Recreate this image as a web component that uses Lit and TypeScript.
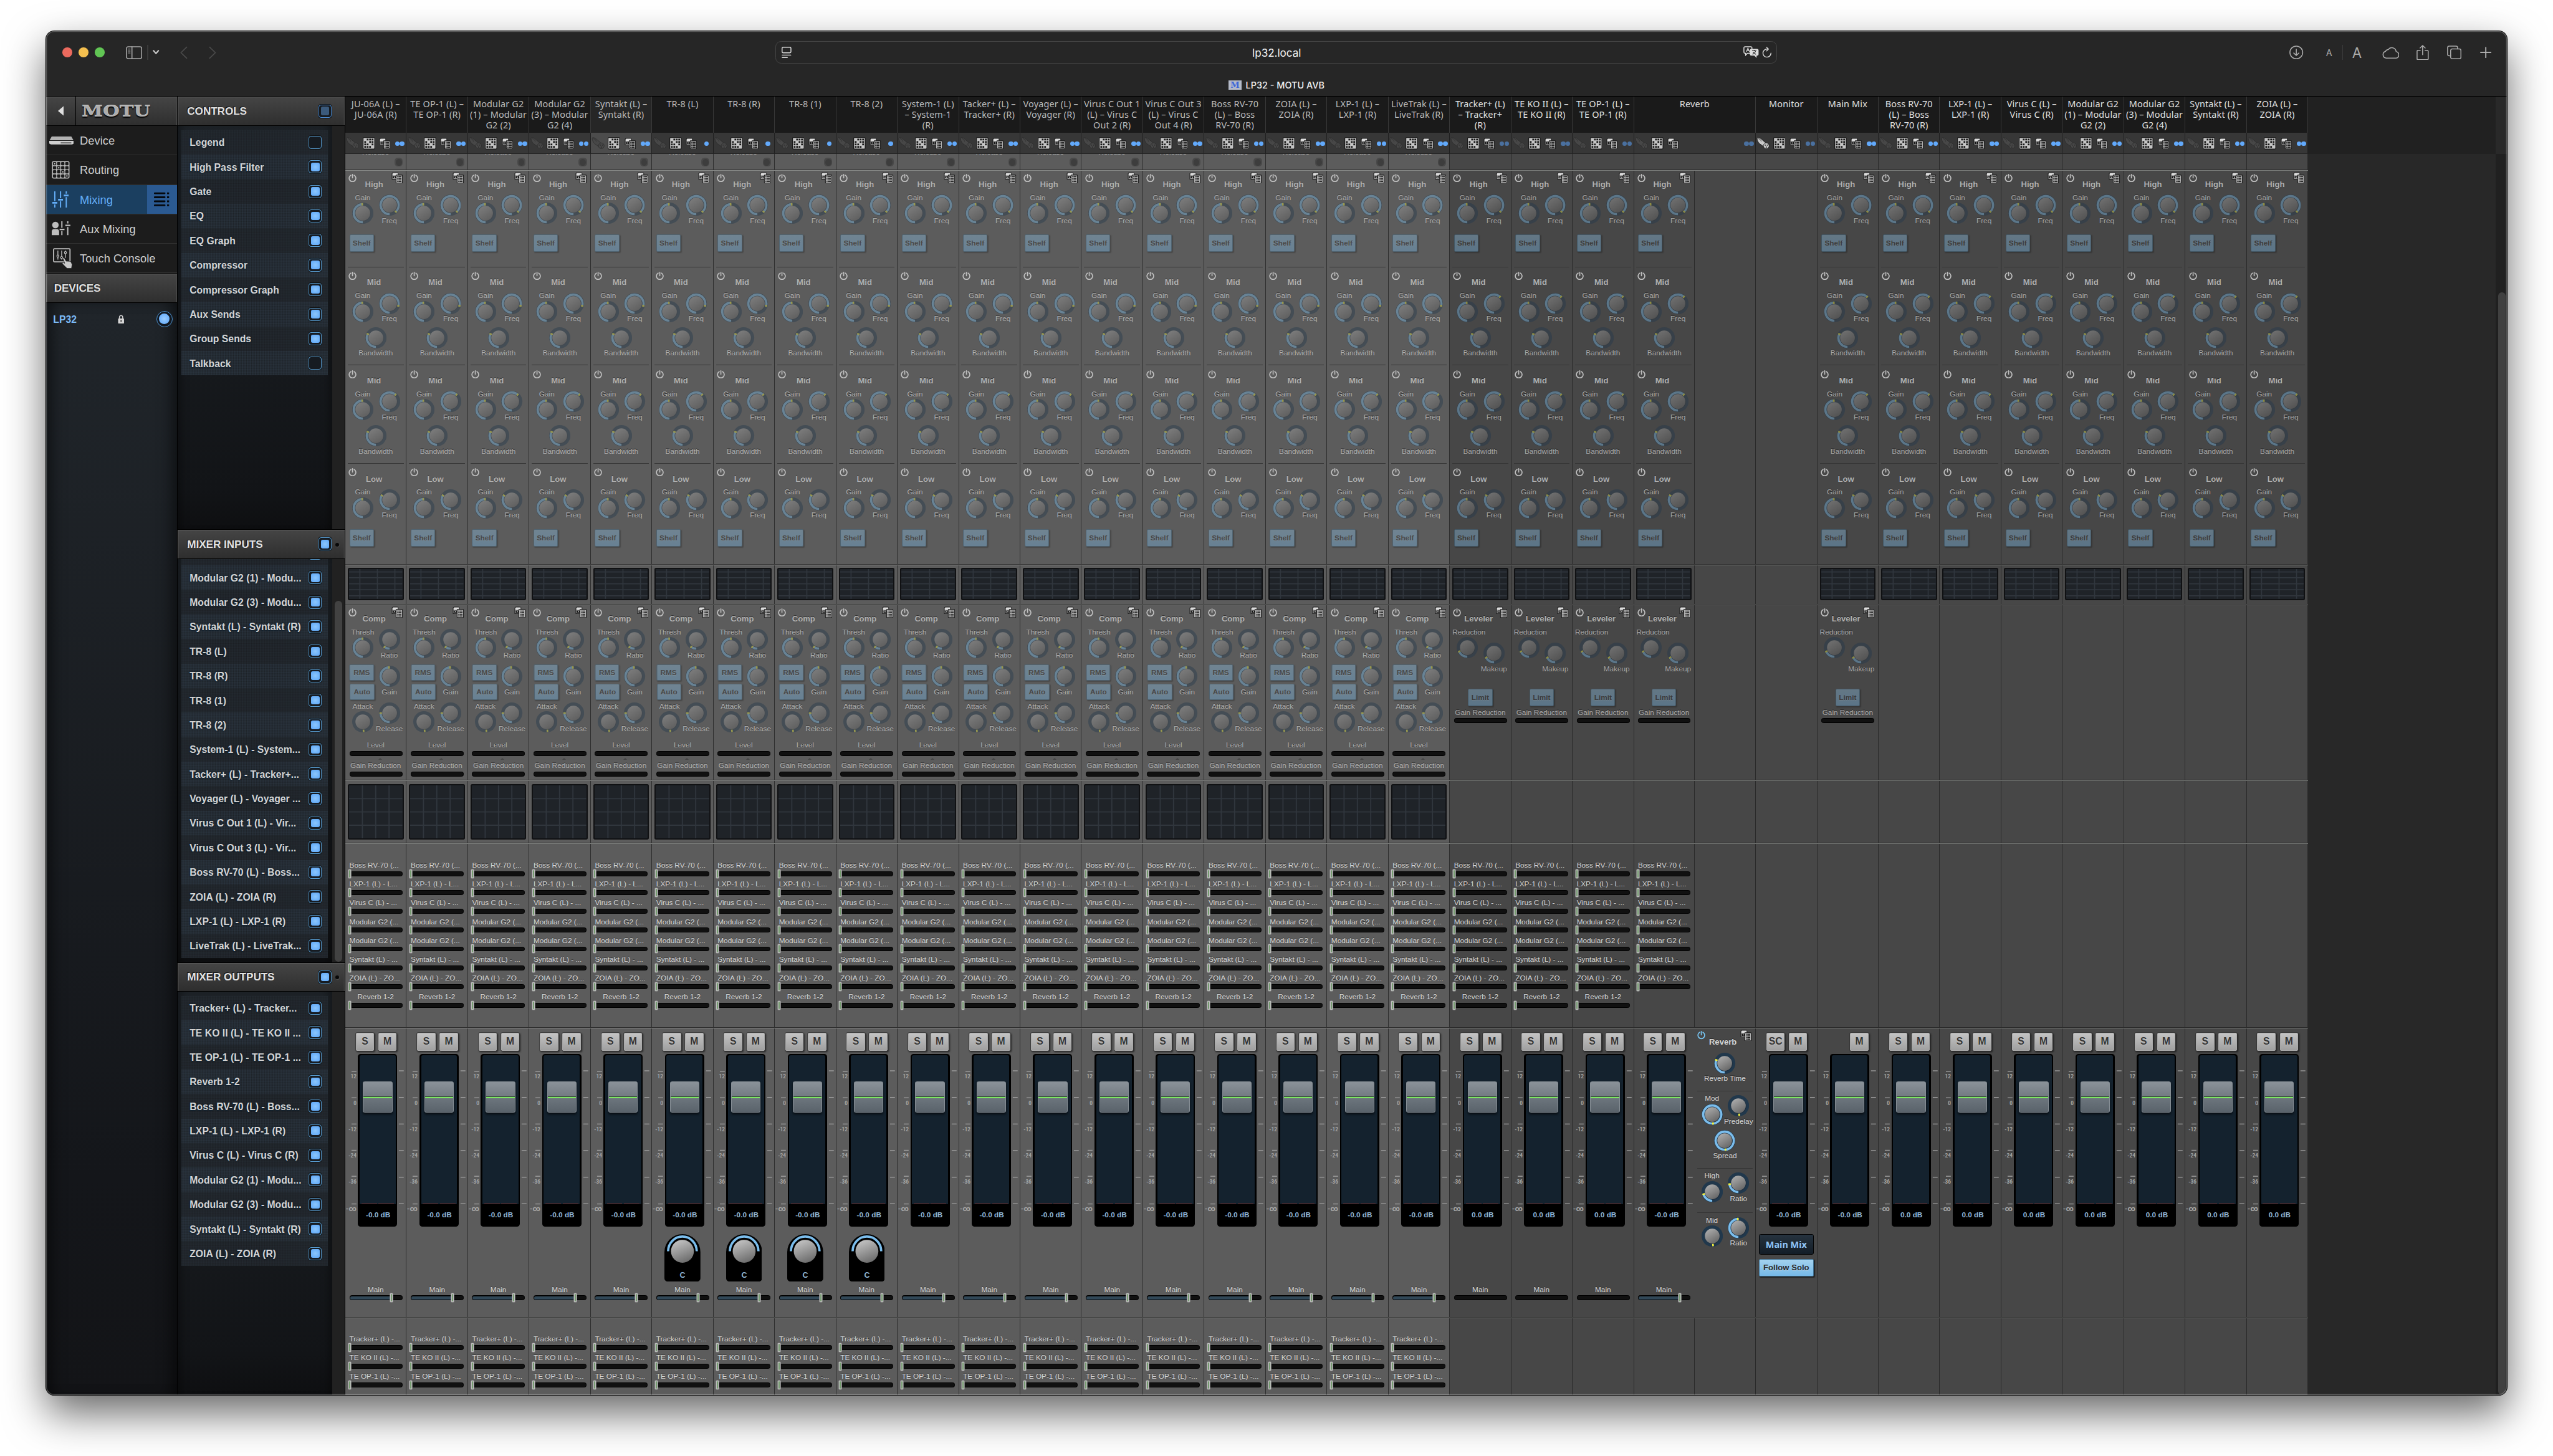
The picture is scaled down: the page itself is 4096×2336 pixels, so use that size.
import { LitElement, html, svg, css, nothing } from "lit";
import { customElement, property } from "lit/decorators.js";
import { classMap } from "lit/directives/class-map.js";

interface Send { text: string; center?: boolean }
interface Strip {
  name: string[];
  kind: "in" | "out";
  selected?: boolean;
  mono?: boolean;
  dimDots?: boolean;
  mic?: boolean;
  gate?: boolean;
  eq?: boolean;
  dyn?: "comp" | "leveler";
  sends?: number;
  groups?: boolean;
  buttons: string[];
  db: string;
  main?: "fill" | "empty";
  reverb?: boolean;
  monitor?: boolean;
}

const SENDS: Send[] = [
  { text: "Boss RV-70 (..." },
  { text: "LXP-1 (L) - L..." },
  { text: "Virus C (L) - ..." },
  { text: "Modular G2 (..." },
  { text: "Modular G2 (..." },
  { text: "Syntakt (L) - ..." },
  { text: "ZOIA (L) - ZO..." },
  { text: "Reverb 1-2", center: true },
];
const GROUPS: Send[] = [
  { text: "Tracker+ (L) -..." },
  { text: "TE KO II (L) -..." },
  { text: "TE OP-1 (L) -..." },
];

const input = (name: string[], extra: Partial<Strip> = {}): Strip => ({
  name, kind: "in", gate: true, eq: true, dyn: "comp", sends: 8, groups: true,
  buttons: ["S", "M"], db: "-0.0 dB", main: "fill", ...extra,
});
const group = (name: string[], extra: Partial<Strip> = {}): Strip => ({
  name, kind: "out", dimDots: true, eq: true, dyn: "leveler", sends: 8,
  buttons: ["S", "M"], db: "0.0 dB", main: "empty", ...extra,
});
const aux = (name: string[], extra: Partial<Strip> = {}): Strip => ({
  name, kind: "out", eq: true, buttons: ["S", "M"], db: "0.0 dB", ...extra,
});

const STRIPS: Strip[] = [
  input(["JU-06A (L) –", "JU-06A (R)"]),
  input(["TE OP-1 (L) –", "TE OP-1 (R)"]),
  input(["Modular G2", "(1) – Modular", "G2 (2)"]),
  input(["Modular G2", "(3) – Modular", "G2 (4)"]),
  input(["Syntakt (L) –", "Syntakt (R)"], { selected: true }),
  input(["TR-8 (L)"], { mono: true }),
  input(["TR-8 (R)"], { mono: true }),
  input(["TR-8 (1)"], { mono: true }),
  input(["TR-8 (2)"], { mono: true }),
  input(["System-1 (L)", "– System-1", "(R)"]),
  input(["Tacker+ (L) –", "Tracker+ (R)"]),
  input(["Voyager (L) –", "Voyager (R)"]),
  input(["Virus C Out 1", "(L) – Virus C", "Out 2 (R)"]),
  input(["Virus C Out 3", "(L) – Virus C", "Out 4 (R)"]),
  input(["Boss RV-70", "(L) – Boss", "RV-70 (R)"]),
  input(["ZOIA (L) –", "ZOIA (R)"]),
  input(["LXP-1 (L) –", "LXP-1 (R)"]),
  input(["LiveTrak (L) –", "LiveTrak (R)"]),
  group(["Tracker+ (L)", "– Tracker+", "(R)"]),
  group(["TE KO II (L) –", "TE KO II (R)"]),
  group(["TE OP-1 (L) –", "TE OP-1 (R)"]),
  group(["Reverb"], { reverb: true, sends: 7, db: "-0.0 dB", main: "fill" }),
  { name: ["Monitor"], kind: "out", dimDots: true, mic: true, monitor: true, buttons: ["SC", "M"], db: "-0.0 dB" },
  aux(["Main Mix"], { dyn: "leveler", buttons: ["M"], db: "-0.0 dB" }),
  aux(["Boss RV-70", "(L) – Boss", "RV-70 (R)"]),
  aux(["LXP-1 (L) –", "LXP-1 (R)"]),
  aux(["Virus C (L) –", "Virus C (R)"]),
  aux(["Modular G2", "(1) – Modular", "G2 (2)"]),
  aux(["Modular G2", "(3) – Modular", "G2 (4)"]),
  aux(["Syntakt (L) –", "Syntakt (R)"]),
  aux(["ZOIA (L) –", "ZOIA (R)"]),
];

const CONTROLS: [string, boolean][] = [
  ["Legend", false], ["High Pass Filter", true], ["Gate", true], ["EQ", true], ["EQ Graph", true],
  ["Compressor", true], ["Compressor Graph", true], ["Aux Sends", true], ["Group Sends", true], ["Talkback", false],
];
const INPUTS: [string, boolean][] = [
  "", "Modular G2 (1) - Modu...", "Modular G2 (3) - Modu...", "Syntakt (L) - Syntakt (R)",
  "TR-8 (L)", "TR-8 (R)", "TR-8 (1)", "TR-8 (2)", "System-1 (L) - System...", "Tacker+ (L) - Tracker+...",
  "Voyager (L) - Voyager ...", "Virus C Out 1 (L) - Vir...", "Virus C Out 3 (L) - Vir...", "Boss RV-70 (L) - Boss...",
  "ZOIA (L) - ZOIA (R)", "LXP-1 (L) - LXP-1 (R)", "LiveTrak (L) - LiveTrak...",
].map((t) => [t, true]);
const OUTPUTS: [string, boolean][] = [
  "Tracker+ (L) - Tracker...", "TE KO II (L) - TE KO II ...", "TE OP-1 (L) - TE OP-1 ...", "Reverb 1-2",
  "Boss RV-70 (L) - Boss...", "LXP-1 (L) - LXP-1 (R)", "Virus C (L) - Virus C (R)", "Modular G2 (1) - Modu...",
  "Modular G2 (3) - Modu...", "Syntakt (L) - Syntakt (R)", "ZOIA (L) - ZOIA (R)",
].map((t) => [t, true]);

/* ---------- icons ---------- */

const powerIcon = (on = false) => html`<svg class="power" width="10" height="10" viewBox="0 0 10 10" fill="none"
  stroke=${on ? "#78c6f3" : "#c0c0c0"} stroke-width="1.25" stroke-linecap="round">
  <path d="M3 1.7A4.1 4.1 0 1 0 7 1.7"/><path d="M5 .7V4.9"/></svg>`;

const listIcon = () => html`<svg class="preset" width="14" height="14" viewBox="0 0 14 14">
  <path d="M1.6 .4H7.6L8.6 1.4V9.2H.4V1.6Z" fill="#1d1d1d"/>
  <path d="M2 1.2H7.8V4.4H1.2V2Z" fill="#dcdcdc"/><rect x="1.2" y="4.4" width="6.6" height="4" fill="#a0a0a0"/>
  <rect x="2" y="5" width="3.6" height="2.6" fill="#111"/><rect x="3.2" y="5.8" width="1.2" height="1.2" fill="#ddd"/>
  <rect x="5.2" y="3.3" width="8.6" height="10.6" rx=".8" fill="#1d1d1d"/>
  <rect x="6" y="4.1" width="7" height="9" rx=".4" fill="#b4b4b4"/>
  <path d="M7 5.6H8M8.6 5.6H12.2M7 7.6H8M8.6 7.6H12.2M7 9.6H8M8.6 9.6H12.2M7 11.6H8M8.6 11.6H12.2" stroke="#161616" stroke-width="1"/>
</svg>`;

const CELLS = [[1, 0], [2, 0], [3, 0], [0, 1], [2, 1], [3, 1], [0, 2], [1, 2], [3, 2], [0, 3], [1, 3], [2, 3]];
const gridIcon = () => html`<svg width="15" height="15" viewBox="0 0 15 15">
  <rect width="15" height="15" rx="1.6" fill="#191919"/><rect x=".9" y=".9" width="13.2" height="13.2" rx=".7" fill="#c4c4c4"/>
  ${CELLS.map(([x, y]) => svg`<rect x=${1.9 + x * 3} y=${1.9 + y * 3} width="2.1" height="2.1" fill="#171717"/>`)}
</svg>`;

const plugIcon = (on = false) => html`<svg width="16" height="15" viewBox="0 0 16 15">
  <g fill=${on ? "#c9c9c9" : "#474747"} stroke=${on ? "#151515" : "#2c2c2c"} stroke-width=".6">
    <path d="M1 .8C2.4 .2 4.6 1 6.4 2.8L12 7.6 9.6 12.2 4.2 8.2C1.6 6.2 .4 2.4 1 .8Z"/>
    <path d="M2.4 2C4 1.8 5.6 3.6 5.8 5.4" fill="none"/>
    <circle cx="12" cy="10.6" r="3.5"/>
  </g>
  <g fill=${on ? "#151515" : "#2c2c2c"}><circle cx="10.8" cy="9.8" r=".7"/><circle cx="13.3" cy="9.8" r=".7"/><circle cx="12" cy="12.2" r=".7"/></g>
</svg>`;

/* value runs 0..1 clockwise from six o'clock */
const knob = (value: number) => {
  const v = Math.min(Math.max(value, 0), 0.999);
  const a = v * 2 * Math.PI;
  const x = 13 - 11 * Math.sin(a);
  const y = 13 + 11 * Math.cos(a);
  return html`<svg class="knob" width="26" height="26" viewBox="0 0 26 26">
    <defs><linearGradient id="kb" x1="0" y1="0" x2=".6" y2="1"><stop offset="0" stop-color="#b4b4b4"/><stop offset="1" stop-color="#6a6a6a"/></linearGradient></defs>
    <circle cx="13" cy="13" r="13" fill="#21384c"/>
    ${v > 0.01 ? svg`<path d="M13 24A11 11 0 ${v > 0.5 ? 1 : 0} 1 ${x} ${y}" fill="none" stroke="#7bbdec" stroke-width="2.8"/>` : nothing}
    <rect x="12" y="22.4" width="2" height="3" fill="#f6f23e" transform="rotate(${v < 0.01 || v > 0.99 ? -5 : v * 360} 13 13)"/>
    <circle cx="13.4" cy="13.4" r="9.3" fill="#1c2a38" opacity=".7"/>
    <circle cx="13" cy="13" r="9" fill="url(#kb)"/>
  </svg>`;
};

const LEFT_SCALE: [number, string][] = [[21.2, "12"], [53.5, "0"], [85.5, "-12"], [117.6, "-24"], [149.4, "-36"], [183.3, "-∞"]];
const RIGHT_SCALE = [20.5, 53, 85.5, 118, 150.6, 183];

@customElement("mix-strip")
class MixStrip extends LitElement {
  @property({ attribute: false }) data!: Strip;

  static styles = css`
    :host { display: block; flex: none; width: 75px; height: 1587px; }
    :host([wide]) { width: 149px; }
    * { box-sizing: border-box; }
    svg { display: block; flex: none; }
    .strip { height: 100%; display: flex; flex-direction: column; font-family: "Liberation Sans", Arial, sans-serif; --bg: #474747; --line: #2a2a2a; --hi: #777977; }
    .strip.in { --bg: #5c5c5c; --line: #2e2e2e; --hi: #858785; }
    .name { flex: none; height: 44px; padding-top: 2.3px; background: #1a1a1a; border-right: 1px solid #383838; font: 11px/13.1px "Noto Sans", "Open Sans", sans-serif; letter-spacing: .12px; color: #e0e0e0; text-align: center; white-space: nowrap; }
    .name span { display: flex; justify-content: center; }
    .in .name { color: #bcbcbc; }
    .tools { flex: none; height: 26px; display: flex; align-items: center; background: #373737; border-right: 1px solid #202020; border-bottom: 1.5px solid #232323; padding: 1px 2px 0 1px; }
    .selected .name { background: #262626; }
    .selected .tools { background: #4c4c4c; }
    .tools .grid { margin-left: 4px; }
    .tools .list { margin-left: 5px; }
    .dots { margin-left: auto; display: flex; gap: .3px; padding-top: 1px; }
    .dots i { width: 5.6px; height: 5.6px; border-radius: 50%; background: #62a9fb; }
    .dots.dim i { background: #4a709f; }
    .dots.mono { margin-right: 3px; }
    .sec { flex: none; display: flex; background: var(--bg); border-top: 1px solid var(--hi); border-bottom: 1px solid var(--line); overflow: hidden; }
    .cell { width: 75px; flex: none; display: flex; flex-direction: column; border-right: 1px solid var(--line); position: relative; }
    .cell > * { flex-shrink: 0; }
    .cell.first { width: 74px; }
    .joined .cell.first { border-right-color: transparent; }
    .gate { height: 20px; border-top: 0; }
    .eq { height: 482px; }
    .graph { height: 49px; }
    .dyn { height: 215px; }
    .cgraph { height: 77px; }
    .sends { height: 225px; }
    .fader { height: 354px; }
    .groups { height: 96px; border-bottom: 0; }
    .lbl { height: 10px; font-size: 9px; line-height: 10.6px; color: #dadada; text-shadow: 0 -1px 0 rgba(0,0,0,.4); white-space: nowrap; }
    .off .lbl { color: #b2b2b2; }
    .strip:not(.in) .off .lbl { color: #aaa; }
    .off .knob, .off .btn { opacity: .4; }
    .ghost { margin: -6.8px 0 0 37px; transform: translateX(-50%); align-self: flex-start; color: #a4a4a4; }
    .led { align-self: flex-end; margin: 1.8px 4px 0 0; width: 10px; height: 10.5px; border-radius: 4px; background: #494949; display: flex; align-items: center; justify-content: center; }
    .led i { width: 7.5px; height: 8.5px; border-radius: 50%; background: #3d3d3d; }
    .band { height: 119px; flex: none; display: flex; flex-direction: column; }
    .band:first-child { height: 117px; }
    .rule { flex: none; height: 1px; margin: 0 3px; background: #353535; }
    .head { height: 30px; flex: none; display: flex; padding: 5.4px 4px 0 4px; align-items: flex-start; }
    .band:first-child .head, .head.dynhead { height: 28px; padding-top: 3.5px; }
    .head .preset { margin-top: -2px; }
    .head .blank { width: 14px; }
    .title { flex: 1; text-align: center; font-size: 10px; line-height: 12px; font-weight: 700; color: #d8d8d8; padding-top: 7.2px; text-shadow: 0 -1px 0 rgba(0,0,0,.45); white-space: nowrap; display: flex; justify-content: center; }
    .off .title { color: #b0b0b0; }
    .pair { display: flex; height: 40px; flex: none; }
    .l, .r { display: flex; flex-direction: column; align-items: center; flex: none; }
    .l { width: 42.6px; }
    .r { width: 22.4px; padding-top: 1px; }
    .l .knob { margin-top: 1px; }
    .r .lbl { margin-top: 1px; }
    .btn { width: 30px; height: 21.5px; flex: none; border: 1px solid #3f6f90; border-radius: 1.5px; background: linear-gradient(#8fc0e2, #7ab9e8); color: #2b2b2b; font-size: 9px; font-weight: 700; display: flex; align-items: center; justify-content: center; box-shadow: 1px 1px 1px rgba(0,0,0,.5); text-shadow: 0 1px 0 rgba(255,255,255,.35); }
    .shelf { margin: 9.8px 0 0 5px; }
    .bw { display: flex; flex-direction: column; align-items: center; width: 74.4px; padding-top: 3px; }
    .bw .lbl { margin-top: 1px; }
    .screen { margin: 3.5px 3px 0 3px; border: 1.8px solid #101113; border-radius: 2px; background: #1f2328; }
    .screen svg { width: 100%; height: 100%; }
    .s1 { height: 39.5px; }
    .s2 { height: 68px; }
    .comp { display: flex; height: 138px; flex: none; }
    .comp .btn { height: 20px; }
    .rms { margin-top: 7px; transform: translateX(-1.3px); }
    .auto { margin-top: 4px; transform: translateX(-.8px); }
    .comp .attack { margin-top: 2.5px; }
    .comp .r .knob + .lbl + .knob { margin-top: 8px; }
    .lev .first { height: 74px; }
    .lev .red { margin-left: 4px; }
    .lev .r { padding-top: 18px; }
    .mid { display: flex; justify-content: center; }
    .gr { margin-top: 2.6px; }
    .bar { height: 6px; margin: 2px 4.5px 0 5px; background: #101010; border: 1px solid #000; border-radius: 2.5px; display: flex; align-items: center; flex: none; }
    .fill { height: 4px; width: 51px; background: #314858; border-radius: 2px 0 0 2px; flex: none; }
    .thumb { width: 4.6px; height: 12.2px; margin-left: -3px; flex: none; }
    .tri { width: 0; height: 0; margin: 2.5px 0 0 40px; border: 3px solid transparent; border-top: 0; border-bottom: 2.8px solid #474747; }
    .send { height: 23px; flex: none; }
    .send .lbl { padding-left: 5px; display: flex; }
    .send .lbl.c { padding: 0; justify-content: center; }
    .list8 { padding-top: 21px; }
    .keys { display: flex; justify-content: flex-end; gap: 5px; height: 32px; padding: 5.5px 11.5px 0 0; flex: none; }
    .key { width: 22.5px; height: 22px; border-radius: 1.5px; background: linear-gradient(#c4c4c4, #9f9f9f); border: 1px solid #a9a9a9; color: #333; font-size: 12px; font-weight: 700; display: flex; align-items: center; justify-content: center; box-shadow: 0 0 0 .5px #333, 1px 1px 2px rgba(0,0,0,.6); text-shadow: 0 1px 0 rgba(255,255,255,.4); }
    .slider { display: flex; height: 211px; flex: none; margin-top: -1px; }
    .well { width: 48px; height: 211px; border-radius: 3.5px; background: #000; padding: 2px 2px 0; display: flex; flex-direction: column; flex: none; }
    .track { height: 182px; background: #14222e; border-radius: 2px 2px 0 0; display: flex; flex-direction: column; align-items: center; justify-content: space-between; padding-top: 32px; }
    .cap { width: 36px; height: 38px; border-radius: 2px; background: linear-gradient(#8a9299 0, #737b82 48%, #2a4a2a 49%, #77e35c 50%, #84f765 53%, #6c757d 54%, #5a636b 100%); border: 1px solid #868e95; box-shadow: 0 2px 3px rgba(0,0,0,.6); }
    .clips { display: flex; gap: 2px; width: 40px; }
    .clips i { flex: 1; height: 1px; background: #7a2e2c; }
    .db { height: 26px; display: flex; align-items: center; justify-content: center; color: #8fb4d4; font-size: 9px; font-weight: 700; white-space: nowrap; padding-left: 1px; }
    .extra { height: 72.4px; flex: none; padding: 9.4px 3.5px 0; }
    .pan { margin-left: 11.7px; width: 44px; height: 58px; }
    .select { height: 25px; border: 1px solid #000; border-radius: 2px; background: linear-gradient(#26333f, #131d27); color: #8fc3f7; font: 700 11px "Noto Sans", sans-serif; display: flex; align-items: center; justify-content: center; }
    .solo { width: auto; margin-top: 5.5px; font-size: 10px; background: linear-gradient(#a3d2ef, #76b9e8); }
    .reverb .head { padding-left: 3px; }
    .reverb .rule { margin-top: 9.5px; }
    .reverb .pair { margin-top: 4px; }
    .reverb .bw { padding-top: 1.5px; }
    .reverb .pair.short { height: 36px; }
    .reverb .bw.spread { padding-top: 7px; }
  `;

  private label = (t: string) => html`<div class="lbl">${t}</div>`;

  private thumb() {
    return html`<svg class="thumb" viewBox="0 0 4.6 12.2"><rect x=".3" y=".3" width="4" height="11.6" rx="1.3" fill="#bdbdbd" stroke="#6d6d6d" stroke-width=".4"/><rect x="1.8" y="1.8" width="1" height="8.6" fill="#4f8a46"/></svg>`;
  }

  private band(title: string, freq: number, first: boolean, bw: boolean, last: boolean) {
    return html`<div class="band">
        <div class="head">${powerIcon()}<div class="title">${title}</div>${first ? listIcon() : html`<div class="blank"></div>`}</div>
        <div class="pair">
          <div class="l">${this.label("Gain")}${knob(0.49)}</div>
          <div class="r">${knob(freq)}${this.label("Freq")}</div>
        </div>
        ${bw ? html`<div class="bw">${knob(0.32)}${this.label("Bandwidth")}</div>` : html`<div class="btn shelf">Shelf</div>`}
      </div>
      ${last ? nothing : html`<div class="rule"></div>`}`;
  }

  private eq() {
    const inp = this.data.kind === "in";
    return html`${this.band("High", 0.88, true, false, false)}${this.band("Mid", inp ? 0.79 : 0.614, false, true, false)}
      ${this.band("Mid", 0.614, false, true, false)}${this.band("Low", 0.333, false, false, true)}`;
  }

  private eqGraph() {
    return html`<div class="screen s1"><svg viewBox="0 0 64 36" preserveAspectRatio="none" stroke="#30363d" stroke-width="1.3">
      <path d="M13 0V36M34 0V36M55 0V36M0 3.5H64M0 10.5H64M0 17.8H64M0 25H64M0 32.2H64"/></svg></div>`;
  }
  private compGraph() {
    return html`<div class="screen s2"><svg viewBox="0 0 64 64" preserveAspectRatio="none" stroke="#30363d" stroke-width="1.4">
      <path d="M16 0V64M32 0V64M48 0V64M0 16H64M0 32H64M0 48H64"/></svg></div>`;
  }

  private comp() {
    return html`<div class="head dynhead">${powerIcon()}<div class="title">Comp</div>${listIcon()}</div>
      <div class="comp">
        <div class="l">${this.label("Thresh")}${knob(0.495)}<div class="btn rms">RMS</div><div class="btn auto">Auto</div>
          <div class="lbl attack">Attack</div>${knob(0)}</div>
        <div class="r">${knob(0.097)}${this.label("Ratio")}${knob(0.49)}${this.label("Gain")}${knob(0.25)}${this.label("Release")}</div>
      </div>
      <div class="lbl mid">Level</div><div class="bar"></div><div class="tri"></div>
      <div class="lbl mid gr">Gain Reduction</div><div class="bar"></div>`;
  }

  private leveler() {
    return html`<div class="head dynhead">${powerIcon()}<div class="title">Leveler</div>${listIcon()}</div>
      <div class="lev">
        <div class="pair first">
          <div class="l"><div class="lbl red">Reduction</div>${knob(0.18)}</div>
          <div class="r">${knob(0.17)}${this.label("Makeup")}</div>
        </div>
        <div class="mid"><div class="btn">Limit</div></div>
        <div class="lbl mid gr">Gain Reduction</div><div class="bar"></div>
      </div>`;
  }

  private sendList(items: Send[]) {
    return html`<div class="list8">${items.map((s) => html`<div class="send">
      <div class=${classMap({ lbl: true, c: !!s.center })}>${s.text}</div><div class="bar">${this.thumb()}</div></div>`)}</div>`;
  }

  private fader() {
    const d = this.data;
    return html`<div class="keys">${d.buttons.map((b) => html`<div class="key">${b}</div>`)}</div>
      <div class="slider">
        <svg width="15.6" height="211" viewBox="0 0 15.6 211" fill="#a8a8a8" font-family="Roboto, sans-serif" text-anchor="end">
          ${LEFT_SCALE.map(([y, t]) => svg`<rect x="7.6" y=${y - 0.4} width="6" height=".9"/><text x="13.6" y=${y + 8.8} font-size=${t === "-∞" ? 9 : 6.2} font-weight="700">${t}</text>`)}
        </svg>
        <div class="well">
          <div class="track"><div class="cap"></div><div class="clips">${d.mono ? html`<i></i>` : html`<i></i><i></i>`}</div></div>
          <div class="db">${d.db}</div>
        </div>
        <svg width="9" height="211" viewBox="0 0 9 211" fill="#a8a8a8">${RIGHT_SCALE.map((y) => svg`<rect x="2.2" y=${y - 0.4} width="6" height=".9"/>`)}</svg>
      </div>
      <div class="extra">${d.mono ? this.pan() : d.monitor ? html`<div class="select">Main Mix</div><div class="btn solo">Follow Solo</div>` : nothing}</div>
      ${d.main ? html`<div class="lbl mid">Main</div><div class="bar">${d.main === "fill" ? html`<div class="fill"></div>${this.thumb()}` : nothing}</div>` : nothing}`;
  }

  private pan() {
    return html`<svg class="pan" viewBox="0 0 44 58">
      <defs><linearGradient id="pk" x1=".2" y1="0" x2=".6" y2="1"><stop offset="0" stop-color="#c6c6c6"/><stop offset="1" stop-color="#6c6c6c"/></linearGradient></defs>
      <path d="M0 22A22 22 0 0 1 44 22V54A4 4 0 0 1 40 58H4A4 4 0 0 1 0 54Z" fill="#000"/>
      <path d="M4.5 21A17.5 18 0 0 1 39.5 21" fill="none" stroke="#7bbdec" stroke-width="2.8"/>
      <circle cx="22" cy="21" r="14" fill="url(#pk)"/>
      <text x="22" y="53" text-anchor="middle" font-size="9.5" font-weight="700" fill="#8fb4d4">C</text></svg>`;
  }

  private reverbSection() {
    return html`
      <div class="head dynhead">${powerIcon(true)}<div class="title">Reverb</div>${listIcon()}</div>
      <div class="bw">${knob(0.31)}${this.label("Reverb Time")}</div>
      <div class="rule"></div>
      <div class="pair short"><div class="l">${this.label("Mod")}${knob(1)}</div><div class="r">${knob(0)}${this.label("Predelay")}</div></div>
      <div class="bw spread">${knob(1)}${this.label("Spread")}</div>
      <div class="rule"></div>
      <div class="pair"><div class="l">${this.label("High")}${knob(0.207)}</div><div class="r">${knob(0.23)}${this.label("Ratio")}</div></div>
      <div class="rule"></div>
      <div class="pair"><div class="l">${this.label("Mid")}${knob(0)}</div><div class="r">${knob(0.49)}${this.label("Ratio")}</div></div>`;
  }

  private section(cls: string, content: unknown, off = true, second: unknown = nothing) {
    const rev = !!this.data.reverb;
    return html`<div class=${"sec " + cls}>
      <div class=${classMap({ cell: true, off, first: rev })}>${content}</div>
      ${rev ? html`<div class="cell reverb">${second}</div>` : nothing}</div>`;
  }

  render() {
    const d = this.data;
    return html`<div class=${classMap({ strip: true, in: d.kind === "in", selected: !!d.selected })}>
      <div class="name">${d.name.map((l) => html`<span>${l}</span>`)}</div>
      <div class="tools">
        ${plugIcon(!!d.mic)}<div class="grid">${gridIcon()}</div><div class="list">${listIcon()}</div>
        <div class=${classMap({ dots: true, dim: !!d.dimDots, mono: !!d.mono })}>${d.mono ? html`<i></i>` : html`<i></i><i></i>`}</div>
      </div>
      ${this.section("gate joined", d.gate ? html`<div class="lbl ghost">Release</div><div class="led"><i></i></div>` : nothing)}
      ${this.section("eq", d.eq ? this.eq() : nothing)}
      ${this.section("graph", d.eq ? this.eqGraph() : nothing)}
      ${this.section("dyn", d.dyn === "comp" ? this.comp() : d.dyn === "leveler" ? this.leveler() : nothing)}
      ${this.section("cgraph", d.dyn === "comp" ? this.compGraph() : nothing)}
      ${this.section("sends", d.sends ? this.sendList(SENDS.slice(0, d.sends)) : nothing, false)}
      ${this.section("fader joined", this.fader(), false, d.reverb ? this.reverbSection() : nothing)}
      ${this.section("groups", d.groups ? this.sendList(GROUPS) : nothing, false)}
    </div>`;
  }
}

/* ---------- window ---------- */

const line = (w: number, h: number, body: unknown, color = "#a9a9a9", sw = 1.2) => html`<svg width=${w} height=${h} viewBox="0 0 ${w} ${h}"
  fill="none" stroke=${color} stroke-width=${sw} stroke-linecap="round" stroke-linejoin="round">${body}</svg>`;

@customElement("app-root")
class AppRoot extends LitElement {
  static styles = css`
    :host { display: block; }
    * { box-sizing: border-box; }
    svg { display: block; flex: none; }
    .stage { zoom: 1.312822; width: 3120px; height: 1779px; padding: 38px 56px 0; background: #fff; overflow: hidden; font-family: "Liberation Sans", Arial, sans-serif; }
    .window { position: relative; height: 1667px; border-radius: 10px; box-shadow: 0 0 0 .8px #000, 0 22px 50px rgba(0,0,0,.6); }
    .clip { height: 100%; border-radius: 10px; overflow: hidden; background: #282828; display: flex; flex-direction: column; }
    .edge { position: absolute; inset: 0; border-radius: 10px; box-shadow: inset 0 0 0 1px rgba(255,255,255,.24); }
    .chrome { height: 80px; flex: none; background: #262626; border-bottom: 1px solid #000; }
    .bar { height: 52px; display: flex; align-items: center; padding-left: 20px; }
    .lights { display: flex; gap: 8px; margin-right: 26px; }
    .lights i { width: 12px; height: 12px; border-radius: 50%; background: #ec6a5e; }
    .lights i:nth-child(2) { background: #f4bf4f; }
    .lights i:nth-child(3) { background: #61c554; }
    .sep { width: 1px; height: 19px; background: #3a3a3a; flex: none; }
    .url { width: 1224px; height: 28px; margin: 0 626.5px 0 683px; border: 1px solid #444; border-radius: 7px; display: flex; align-items: center; justify-content: space-between; padding: 0 5.5px 0 7px; flex: none; }
    .addr { color: #f4f4f4; font: 13px Inter, sans-serif; padding-left: 23px; }
    .urlend { display: flex; gap: 4px; align-items: center; }
    .fontA { color: #a9a9a9; font-family: Inter, sans-serif; width: 12px; text-align: center; }
    .tab { height: 28px; display: flex; align-items: center; justify-content: center; gap: 5px; font: 500 11px Inter, sans-serif; color: #f2f2f2; }
    .fav { width: 16px; height: 12px; background: #b4bac8; color: #3d66d8; font: 700 10px/12px "DejaVu Serif", serif; display: flex; justify-content: center; }
    .body { flex: 1; display: flex; min-height: 0; }
    .side { width: 160px; flex: none; display: flex; flex-direction: column; background: #1c1c1c; }
    .hdr { height: 36px; flex: none; background: linear-gradient(#454545, #2e2e2e); border-bottom: 1px solid #000; box-shadow: inset 1px 1px 0 #575757, inset -1px 0 0 #484848; display: flex; align-items: center; color: #e2e2e2; font-size: 13px; font-weight: 700; text-shadow: -1px -1px 0 #111; white-space: nowrap; }
    .hdr > span { padding-top: 1.4px; }
    .hdr.mid { border-top: 1px solid #000; }
    .hdr.dv { padding-left: 10px; }
    .backc { width: 37px; height: 36px; border-right: 1px solid #000; display: flex; align-items: center; justify-content: center; }
    .logo { font: 700 18px "DejaVu Serif", serif; color: #adadad; transform: scaleX(1.3); transform-origin: left; margin: 1px 0 0 7px; text-shadow: 0 -1px 0 #d8d8d8, 0 1.5px 1px #000; }
    .nav { height: 36px; flex: none; display: flex; align-items: center; border-bottom: 1px solid #323232; color: #cecece; font-size: 14px; }
    .nav > span { padding-top: 1.4px; }
    .ico { width: 41.5px; padding-left: 4px; flex: none; display: flex; }
    .nav.on { background: #1b3f60; color: #63adf7; }
    .more { margin-left: auto; width: 36px; height: 100%; background: #2b5a92; display: flex; align-items: center; justify-content: center; }
    .devs { flex: 1; background: linear-gradient(#20252a, #14161a 80%, #131417); box-shadow: inset 14px 0 18px -8px rgba(0,0,0,.55), inset -14px 0 18px -8px rgba(0,0,0,.55); }
    .dev { height: 40px; display: flex; align-items: center; padding: 0 5px 0 9px; color: #7cbbf7; font-size: 12px; font-weight: 700; }
    .dev span { width: 79px; padding-top: 1px; }
    .radio { width: 20px; height: 20px; border-radius: 50%; border: 1px solid #4b90cc; background: #121820; display: flex; align-items: center; justify-content: center; margin-left: auto; }
    .radio i { width: 12.8px; height: 12.8px; border-radius: 50%; background: radial-gradient(#9accff, #5aa6fa); }
    .panel { width: 206px; flex: none; display: flex; flex-direction: column; background: #212121; border: solid #000; border-width: 0 1px; }
    .panel .hdr { padding: 0 16px 0 12px; }
    .panel .hdr .box { margin-left: auto; }
    .panel .hdr .hole { width: 4.5px; height: 4.5px; border-radius: 50%; background: #080808; box-shadow: .5px 1px 0 #4a4a4a; margin: 1px -9px 0 4.5px; }
    .box { width: 16px; height: 16px; border-radius: 3px; border: 1px solid #569ace; background: #161b21; display: flex; align-items: center; justify-content: center; flex: none; box-shadow: 0 0 0 .7px #111; }
    .box i { width: 10.4px; height: 10.4px; border-radius: 2px; background: radial-gradient(#8cc6fc, #5ba6f8); }
    .box.dimmed { border-color: #4b8ad0; }
    .box.dimmed i { background: #3b5a7c; }
    .scroll { display: flex; justify-content: space-between; overflow: hidden; flex: none; height: 493px; }
    .scroll.last { flex: 1; height: auto; }
    .list { width: 189px; padding: 5px 5px 0; background: linear-gradient(#1e2328, #121417 90%, #0e0f11); box-shadow: inset 10px 0 10px -6px rgba(0,0,0,.35), inset -10px 0 10px -6px rgba(0,0,0,.35); }
    .list.tall { padding-top: 0; }
    .shift { margin-top: -22px; }
    .item { height: 30px; padding: 0 7.5px 0 10px; display: flex; align-items: center; justify-content: space-between; color: #d4d4d4; font-size: 12px; font-weight: 700; white-space: nowrap; text-shadow: 0 0 2px #10202e, 0 1px 1px #10202e; background-color: #1b1f24; background-image: linear-gradient(90deg, rgba(70,92,112,.2) 50%, transparent 50%), linear-gradient(rgba(70,92,112,.14) 50%, transparent 50%); background-size: 2px 2px; }
    .item > span { padding-top: 1.4px; }
    .item:nth-child(odd) { background-color: #1b1e22; background-image: linear-gradient(90deg, rgba(70,92,112,.1) 50%, transparent 50%), linear-gradient(rgba(70,92,112,.08) 50%, transparent 50%); }
    .bar-thumb { width: 9px; background: #424242; border-radius: 4.5px; margin: 51px 3px 1px 0; }
    .strips { display: flex; flex: none; }
    .rest { flex: 1; display: flex; flex-direction: column; }
    .restTop { height: 70px; display: flex; background: #212121; }
    .restTop i { width: 14px; margin-left: auto; background: #292929; }
    .restMain { flex: 1; background: #282828; display: flex; justify-content: flex-end; }
    .vbar { width: 14px; background: #202020; padding: 169px 0 0 3px; }
    .vbar i { display: block; width: 9px; height: 100%; border-radius: 4.5px; background: #404040; }
  `;

  private chrome() {
    return html`<div class="chrome">
      <div class="bar">
        <div class="lights"><i></i><i></i><i></i></div>
        ${line(20, 16, svg`<rect x=".7" y=".7" width="18.6" height="14.6" rx="2.2"/><path d="M7.4 .7V15.3"/><path d="M2.8 3.6H5.2M2.8 6H5.2M2.8 8.4H5.2" stroke-width=".9"/>`)}
        <div class="sep" style="margin:0 6px"></div>
        ${line(8, 6, svg`<path d="M1 1L4 4.4 7 1"/>`, "#c8c8c8", 1.6)}
        <div style="width:25px"></div>${line(9, 16, svg`<path d="M8 1.2L1 8 8 14.8"/>`, "#4b4b4b", 1.3)}
        <div style="width:26.5px"></div>${line(9, 16, svg`<path d="M1 1.2L8 8 1 14.8"/>`, "#4b4b4b", 1.3)}
        <div class="url">
          ${line(12, 14, svg`<rect x=".6" y=".6" width="10.8" height="6.8" rx="1.3"/><path d="M.8 10.2H11.2M.8 13.2H7"/>`, "#dcdcdc", 1.1)}
          <div class="addr">lp32.local</div>
          <div class="urlend">
            <svg width="19" height="15" viewBox="0 0 19 15"><path d="M2 .7H9.2A1.3 1.3 0 0 1 10.5 2V7.4A1.3 1.3 0 0 1 9.2 8.7H5L2.8 11V8.7H2A1.3 1.3 0 0 1 .7 7.4V2A1.3 1.3 0 0 1 2 .7Z" fill="none" stroke="#ddd" stroke-width="1.1"/>
              <path d="M3.6 7L5.6 2.4 7.6 7M4.3 5.5H6.9" fill="none" stroke="#ddd" stroke-width=".9"/>
              <path d="M9.6 3.4H17A1.6 1.6 0 0 1 18.6 5V10A1.6 1.6 0 0 1 17 11.6H16.2V14.4L13.4 11.6H9.6A1.6 1.6 0 0 1 8 10V5A1.6 1.6 0 0 1 9.6 3.4Z" fill="#ddd"/>
              <path d="M10.6 5.7H16M13.3 4.6V5.7M11.2 10C13.2 9 14.6 7.6 14.9 5.9M11.8 7.2C12.6 8.6 13.8 9.6 15.4 10" fill="none" stroke="#262626" stroke-width=".9"/></svg>
            ${line(12, 14, svg`<path d="M6.6 2.9A4.9 4.9 0 1 0 10.9 7.8"/><path d="M5.6 .7L7.8 2.9 5.6 5.1"/>`, "#dcdcdc", 1.1)}
          </div>
        </div>
        ${line(17, 17, svg`<circle cx="8.5" cy="8.5" r="7.8"/><path d="M8.5 4.6V12M5.4 9.2L8.5 12.2 11.6 9.2"/>`)}
        <div class="fontA" style="font-size:11px;margin-left:25.5px">A</div>
        <div class="sep" style="margin:0 11px 0 10px"></div>
        <div class="fontA" style="font-size:17px">A</div>
        <div style="width:24.5px"></div>
        ${line(21, 16, svg`<path d="M5 14.7A4.2 4.2 0 0 1 4 6.5 3.6 3.6 0 0 1 7.4 4.2 5.3 5.3 0 0 1 17 6.6 4.1 4.1 0 0 1 16.6 14.7Z"/>`)}
        <div style="width:21.5px"></div>
        ${line(15, 19, svg`<path d="M4.6 6.6H2A1.3 1.3 0 0 0 .7 7.9V16.9A1.3 1.3 0 0 0 2 18.2H13A1.3 1.3 0 0 0 14.3 16.9V7.9A1.3 1.3 0 0 0 13 6.6H10.4"/><path d="M7.5 12V1M4.4 3.8L7.5 .8 10.6 3.8"/>`)}
        <div style="width:22px"></div>
        ${line(18, 17, svg`<rect x="4.4" y="4.2" width="12.6" height="12" rx="2"/><path d="M4.4 12.6H2.6A1.9 1.9 0 0 1 .7 10.7V2.6A1.9 1.9 0 0 1 2.6 .7H11A1.9 1.9 0 0 1 12.9 2.6V4.2"/>`)}
        <div style="width:22.5px"></div>
        ${line(14, 14, svg`<path d="M7 .8V13.2M.8 7H13.2"/>`, "#b4b4b4", 1.4)}
      </div>
      <div class="tab"><div class="fav">M</div><span>LP32 - MOTU AVB</span></div>
    </div>`;
  }

  private side() {
    const faders = (c: string) => svg`<g stroke=${c} fill="none" stroke-width="1.5"><path d="M3 0V12M3 16V20M10 0V8.4M10 12V20M17 0V2.8M17 7V20"/><path d="M0 14H6M7 10.2H13M14 5H20" stroke-width="2"/></g>`;
    return html`<div class="side">
      <div class="hdr"><div class="backc"><svg width="7" height="12" viewBox="0 0 7 12"><path d="M7 0V12L0 6Z" fill="#e0e0e0"/></svg></div><div class="logo">MOTU</div></div>
      <div class="nav"><div class="ico"><svg width="30" height="10" viewBox="0 0 30 10"><path d="M3 0H27L29.6 4.6H.4Z" fill="#b2b2b2"/><path d="M0 5.4H30V8.6L28 9.8H2L0 8.6Z" fill="#cfcfcf"/><path d="M14 7.8H27" stroke="#333"/></svg></div><span>Device</span></div>
      <div class="nav"><div class="ico"><svg style="margin-left:3.5px" width="22" height="22" viewBox="0 0 22 22"><rect x=".3" y=".3" width="21.4" height="21.4" rx="2" fill="#b9b9b9"/>
        ${[0, 1, 2, 3].map((r) => [0, 1, 2, 3].map((c) => svg`<rect x=${1.5 + c * 5} y=${1.5 + r * 5} width="4" height="4" rx="1" fill="#1c1c1c"/>`))}
        ${[[0, 0], [1, 1], [2, 2], [3, 3]].map(([c, r]) => svg`<rect x=${2.8 + c * 5} y=${2.8 + r * 5} width="1.5" height="1.5" fill="#d0d0d0"/>`)}</svg></div><span>Routing</span></div>
      <div class="nav on"><div class="ico"><svg style="margin-left:4px" width="20" height="20" viewBox="0 0 20 20">${faders("#63adf7")}</svg></div><span>Mixing</span>
        <div class="more"><svg width="19" height="18" viewBox="0 0 19 18" stroke="#05080d" stroke-width="2.2"><path d="M1 1.6H13M1 6.5H13M1 11.4H13M1 16.3H13" stroke-linecap="round"/><path d="M16 1.6H18.5M16 6.5H18.5M16 11.4H18.5M16 16.3H18.5"/></svg></div></div>
      <div class="nav"><div class="ico"><svg style="margin-left:3px" width="23" height="18" viewBox="0 0 23 18"><circle cx="4.5" cy="4.6" r="4" fill="#bebebe"/><path d="M0 17V12.5A3 3 0 0 1 3 9.6H6A3 3 0 0 1 9 12.5V17Z" fill="#bebebe"/>
        <g stroke="#bebebe" stroke-width="1.5"><path d="M12.4 0V8M12.4 12V17M19.6 0V2.6M19.6 7V17"/><path d="M9.6 10H15.6M16.6 5H22.8" stroke-width="1.8"/></g></svg></div><span>Aux Mixing</span></div>
      <div class="nav"><div class="ico"><svg style="margin-left:5px" width="25" height="25" viewBox="0 0 25 25"><rect x=".8" y=".8" width="20" height="16" rx="1" fill="none" stroke="#bebebe" stroke-width="1.4"/>
        <g stroke="#bebebe"><path d="M6 3V14M10.6 3V14M15.2 3V12"/></g><g fill="#1c1c1c" stroke="#bebebe" stroke-width=".9"><circle cx="6" cy="9.8" r="1.3"/><circle cx="10.6" cy="11.6" r="1.3"/><circle cx="15.2" cy="5.6" r="1.3"/></g>
        <path d="M12 12.2L13.6 11.6 16 16 21.6 16.4 23.4 20 22.6 24.8H17.2L12.8 20.4 11.2 18.6 12.6 17.8 14.4 18.6Z" fill="#c9c9c9" stroke="#1c1c1c" stroke-width=".5"/></svg></div><span>Touch Console</span></div>
      <div class="hdr mid dv"><span>DEVICES</span></div>
      <div class="devs"><div class="dev"><span>LP32</span>
        <svg width="8" height="11" viewBox="0 0 8 11"><path d="M2 5V3A2 2 0 0 1 6 3V5" fill="none" stroke="#d6d6d6" stroke-width="1.2"/><rect x=".4" y="4.6" width="7.2" height="6" rx=".6" fill="#d6d6d6"/><rect x="3.4" y="6.4" width="1.2" height="2.2" fill="#222"/></svg>
        <div class="radio"><i></i></div></div></div>
    </div>`;
  }

  private items(list: [string, boolean][]) {
    return list.map(([t, on]) => html`<div class="item"><span>${t}</span><div class="box">${on ? html`<i></i>` : nothing}</div></div>`);
  }

  private panel() {
    return html`<div class="panel">
      <div class="hdr"><span>CONTROLS</span><div class="box dimmed"><i></i></div></div>
      <div class="scroll"><div class="list">${this.items(CONTROLS)}</div></div>
      <div class="hdr mid"><span>MIXER INPUTS</span><div class="box"><i></i></div><div class="hole"></div></div>
      <div class="scroll"><div class="list tall"><div class="shift">${this.items(INPUTS)}</div></div><div class="bar-thumb"></div></div>
      <div class="hdr mid"><span>MIXER OUTPUTS</span><div class="box"><i></i></div><div class="hole"></div></div>
      <div class="scroll last"><div class="list">${this.items(OUTPUTS)}</div></div>
    </div>`;
  }

  render() {
    return html`<div class="stage"><div class="window">
      <div class="clip">
        ${this.chrome()}
        <div class="body">
          ${this.side()}${this.panel()}
          <div class="strips">${STRIPS.map((s) => html`<mix-strip .data=${s} ?wide=${!!s.reverb}></mix-strip>`)}</div>
          <div class="rest"><div class="restTop"><i></i></div><div class="restMain"><div class="vbar"><i></i></div></div></div>
        </div>
      </div>
      <div class="edge"></div>
    </div></div>`;
  }
}
